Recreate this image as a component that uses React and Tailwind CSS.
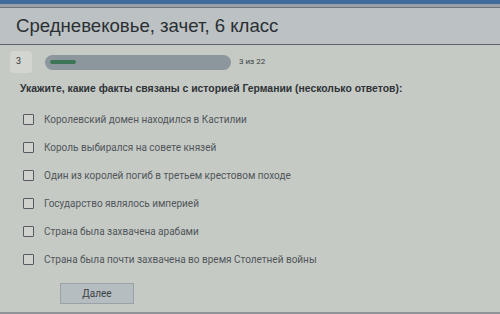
import React, { useState } from "react";

const answers = [
  "Королевский домен находился в Кастилии",
  "Король выбирался на совете князей",
  "Один из королей погиб в третьем крестовом походе",
  "Государство являлось империей",
  "Страна была захвачена арабами",
  "Страна была почти захвачена во время Столетней войны",
];

function App() {
  const [checked, setChecked] = useState([]);

  const toggle = (index) => {
    setChecked((prev) =>
      prev.includes(index) ? prev.filter((i) => i !== index) : [...prev, index]
    );
  };

  return (
    <div
      className="w-[500px] h-[314px] overflow-hidden flex flex-col bg-[#c6cac5]"
      style={{ fontFamily: "Roboto, 'Liberation Sans', sans-serif" }}>
      {/* top strip */}
      <div className="h-[4px] bg-[#3f6c9c]" />
      <div className="h-[3px] bg-[#9aa1a6]" />
      <div className="h-[1px] bg-[#6f767a]" />

      {/* header */}
      <div className="h-[37px] flex items-center px-[16px] bg-[#bcc1c3] border-b border-[#5e6468]">
        <h1 className="text-[18.6px] leading-none text-[#2a2f33] font-['Liberation_Sans',Arial,sans-serif]">
          Средневековье, зачет, 6 класс
        </h1>
      </div>

      {/* progress row */}
      <div className="flex items-center h-[26px] mt-[4px] pl-[10px]">
        <div className="w-[22px] h-[22px] flex items-center pl-[6px] rounded-sm bg-[#d2d5d0] text-[9px] text-[#333]">
          3
        </div>
        <div className="ml-[13px] w-[186px] h-[15px] rounded-full bg-[#8b979d] flex items-center px-[5px]">
          <div className="w-[26px] h-[4px] rounded-full bg-[#3d7656]" />
        </div>
        <span className="ml-[8px] text-[8px] text-[#3a3f44]">3 из 22</span>
      </div>

      {/* question */}
      <p className="mt-[6px] pl-[20px] text-[10.4px] leading-[15px] font-bold text-[#2e3337] font-['Liberation_Sans',Arial,sans-serif]">
        Укажите, какие факты связаны с историей Германии (несколько ответов):
      </p>

      <div className="flex flex-col mt-[17px] pl-[23px] gap-[16px]">
        {answers.map((text, index) => (
          <label
            key={index}
            className="flex items-center gap-[10px] h-[12px] cursor-pointer">
            <input
              type="checkbox"
              checked={checked.includes(index)}
              onChange={() => toggle(index)}
              className="appearance-none w-[11px] h-[11px] border-[1.5px] border-[#555b5e] bg-[#cfd2cd] rounded-[1px] checked:bg-[#555b5e]"
            />
            <span className="text-[10px] text-[#50565a]">{text}</span>
          </label>
        ))}
      </div>

      <div className="mt-[15px] pl-[60px]">
        <button className="w-[74px] h-[21px] bg-[#b6bdc1] border border-[#9aa2a6] text-[10px] text-[#3a3f44]">
          Далее
        </button>
      </div>

      <div className="mt-auto h-[2px] bg-[#8e9497]" />
    </div>
  );
}

export default App;
